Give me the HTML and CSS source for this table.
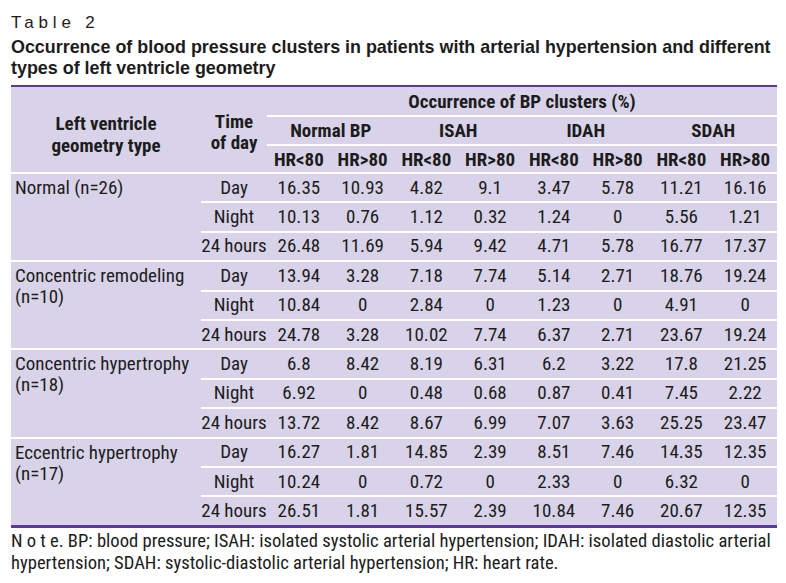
FILE: index.html
```html
<!DOCTYPE html>
<html>
<head>
<meta charset="utf-8">
<link rel="stylesheet" href="styles.css">
</head>
<body>
<div class="page">
  <div class="label">Table 2</div>
  <h1 class="title">Occurrence of blood pressure clusters in patients with arterial hypertension and different<br>types of left ventricle geometry</h1>
  <table class="data">
    <colgroup>
      <col class="c-type"><col class="c-time">
      <col class="c-num"><col class="c-num"><col class="c-num"><col class="c-num">
      <col class="c-num"><col class="c-num"><col class="c-num"><col class="c-num">
    </colgroup>
    <thead>
      <tr class="h1">
        <th rowspan="3" class="th-type">Left ventricle<br>geometry type</th>
        <th rowspan="3" class="th-time">Time<br>of day</th>
        <th colspan="8">Occurrence of BP clusters (%)</th>
      </tr>
      <tr class="h2">
        <th colspan="2">Normal BP</th>
        <th colspan="2">ISAH</th>
        <th colspan="2">IDAH</th>
        <th colspan="2">SDAH</th>
      </tr>
      <tr class="h3">
        <th>HR&lt;80</th><th>HR&gt;80</th>
        <th>HR&lt;80</th><th>HR&gt;80</th>
        <th>HR&lt;80</th><th>HR&gt;80</th>
        <th>HR&lt;80</th><th>HR&gt;80</th>
      </tr>
    </thead>
    <tbody>
      <tr><td rowspan="3" class="type">Normal (n=26)</td><td>Day</td><td>16.35</td><td>10.93</td><td>4.82</td><td>9.1</td><td>3.47</td><td>5.78</td><td>11.21</td><td>16.16</td></tr>
      <tr><td>Night</td><td>10.13</td><td>0.76</td><td>1.12</td><td>0.32</td><td>1.24</td><td>0</td><td>5.56</td><td>1.21</td></tr>
      <tr><td>24 hours</td><td>26.48</td><td>11.69</td><td>5.94</td><td>9.42</td><td>4.71</td><td>5.78</td><td>16.77</td><td>17.37</td></tr>
      <tr><td rowspan="3" class="type">Concentric remodeling<br>(n=10)</td><td>Day</td><td>13.94</td><td>3.28</td><td>7.18</td><td>7.74</td><td>5.14</td><td>2.71</td><td>18.76</td><td>19.24</td></tr>
      <tr><td>Night</td><td>10.84</td><td>0</td><td>2.84</td><td>0</td><td>1.23</td><td>0</td><td>4.91</td><td>0</td></tr>
      <tr><td>24 hours</td><td>24.78</td><td>3.28</td><td>10.02</td><td>7.74</td><td>6.37</td><td>2.71</td><td>23.67</td><td>19.24</td></tr>
      <tr><td rowspan="3" class="type">Concentric hypertrophy<br>(n=18)</td><td>Day</td><td>6.8</td><td>8.42</td><td>8.19</td><td>6.31</td><td>6.2</td><td>3.22</td><td>17.8</td><td>21.25</td></tr>
      <tr><td>Night</td><td>6.92</td><td>0</td><td>0.48</td><td>0.68</td><td>0.87</td><td>0.41</td><td>7.45</td><td>2.22</td></tr>
      <tr><td>24 hours</td><td>13.72</td><td>8.42</td><td>8.67</td><td>6.99</td><td>7.07</td><td>3.63</td><td>25.25</td><td>23.47</td></tr>
      <tr><td rowspan="3" class="type">Eccentric hypertrophy<br>(n=17)</td><td>Day</td><td>16.27</td><td>1.81</td><td>14.85</td><td>2.39</td><td>8.51</td><td>7.46</td><td>14.35</td><td>12.35</td></tr>
      <tr><td>Night</td><td>10.24</td><td>0</td><td>0.72</td><td>0</td><td>2.33</td><td>0</td><td>6.32</td><td>0</td></tr>
      <tr><td>24 hours</td><td>26.51</td><td>1.81</td><td>15.57</td><td>2.39</td><td>10.84</td><td>7.46</td><td>20.67</td><td>12.35</td></tr>
    </tbody>
  </table>
  <p class="note"><span class="spaced">Not</span>e. BP: blood pressure; ISAH: isolated systolic arterial hypertension; IDAH: isolated diastolic arterial hypertension; SDAH: systolic-diastolic arterial hypertension; HR: heart rate.</p>
</div>
</body>
</html>
```

FILE: styles.css
```css
html, body {
  margin: 0;
  padding: 0;
  background: #ffffff;
}

.page {
  padding: 12px 0 0 11px;
  width: 766px;
  color: #1c1c1c;
}

.label {
  font-family: "Liberation Sans", Arial, sans-serif;
  font-size: 17px;
  letter-spacing: 4.8px;
  line-height: 22px;
}

.title {
  margin: 3px 0 0 0;
  width: 775px;
  font-family: "Liberation Sans", Arial, sans-serif;
  font-weight: bold;
  font-size: 17.9px;
  line-height: 21px;
}

.data {
  margin-top: 6px;
  width: 766px;
  border-collapse: collapse;
  table-layout: fixed;
  background: #d8d3e8;
  border-top: 2px solid #5b3a98;
  border-bottom: 3px solid #5b3a98;
  font-family: Roboto, "Open Sans", sans-serif;
  font-stretch: 75%;
  font-size: 19px;
}

.c-type { width: 190px; }
.c-time { width: 66px; }
.c-num { width: 63.75px; }

.data th,
.data td {
  padding: 0;
  text-align: center;
  vertical-align: middle;
  border-top: 2px solid #ffffff;
  white-space: nowrap;
}

.data thead tr:first-child th {
  border-top: 0;
}

.data th {
  font-weight: bold;
}

.h1 th { height: 28px; }
.h2 th { height: 27px; }
.h3 th { height: 26px; }

.data th.th-type {
  line-height: 22px;
  padding-top: 10px;
}

.data th.th-time {
  line-height: 21px;
  padding-top: 5px;
}

.data td {
  height: 27.4px;
  line-height: 20px;
}

.data td.type {
  text-align: left;
  vertical-align: top;
  padding: 3px 0 0 4px;
  line-height: 21px;
}

.note {
  margin: 2px 0 0 0;
  width: 776px;
  font-family: Roboto, "Open Sans", sans-serif;
  font-stretch: 75%;
  font-size: 18.6px;
  line-height: 22px;
}

.spaced {
  letter-spacing: 4.2px;
}
```
